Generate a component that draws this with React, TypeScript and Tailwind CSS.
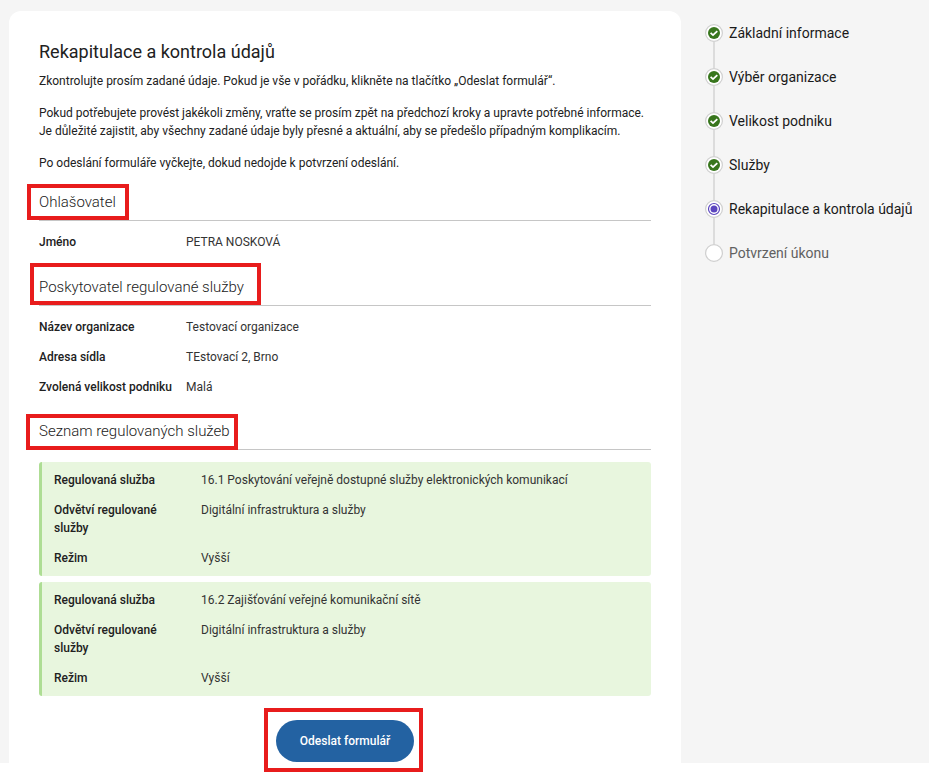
import { clsx } from "clsx";

interface Field {
  label: string;
  value: string;
}

type StepState = "done" | "current" | "pending";

const applicant: Field[] = [{ label: "Jméno", value: "PETRA NOSKOVÁ" }];

const provider: Field[] = [
  { label: "Název organizace", value: "Testovací organizace" },
  { label: "Adresa sídla", value: "TEstovací 2, Brno" },
  { label: "Zvolená velikost podniku", value: "Malá" },
];

const services: Field[][] = [
  [
    { label: "Regulovaná služba", value: "16.1 Poskytování veřejně dostupné služby elektronických komunikací" },
    { label: "Odvětví regulované služby", value: "Digitální infrastruktura a služby" },
    { label: "Režim", value: "Vyšší" },
  ],
  [
    { label: "Regulovaná služba", value: "16.2 Zajišťování veřejné komunikační sítě" },
    { label: "Odvětví regulované služby", value: "Digitální infrastruktura a služby" },
    { label: "Režim", value: "Vyšší" },
  ],
];

const steps: { label: string; state: StepState }[] = [
  { label: "Základní informace", state: "done" },
  { label: "Výběr organizace", state: "done" },
  { label: "Velikost podniku", state: "done" },
  { label: "Služby", state: "done" },
  { label: "Rekapitulace a kontrola údajů", state: "current" },
  { label: "Potvrzení úkonu", state: "pending" },
];

// Red marker frame laid over the element it highlights
function Frame({ className }: { className: string }) {
  return <div className={clsx("pointer-events-none absolute border-4 border-[#e81c1c]", className)} />;
}

function FieldList({ fields }: { fields: Field[] }) {
  return (
    <dl className="space-y-3 text-xs leading-[18px]">
      {fields.map((f) => (
        <div key={f.label} className="flex">
          <dt className="w-[147px] shrink-0 pr-3 font-medium text-[#212121]">{f.label}</dt>
          <dd className="min-w-0 flex-1 text-[#333333]">{f.value}</dd>
        </div>
      ))}
    </dl>
  );
}

function SectionHeading({ title, frame }: { title: string; frame: string }) {
  return (
    <div className="relative border-b border-[#c6c6c6] pb-2">
      <h2 className="text-[15px] font-light leading-5 text-[#212121]">{title}</h2>
      <Frame className={frame} />
    </div>
  );
}

function StepIcon({ state }: { state: StepState }) {
  return (
    <svg className="size-[18px] shrink-0" viewBox="0 0 18 18" fill="none" aria-hidden="true">
      <circle cx="9" cy="9" r="8.4" fill="#fff" stroke="#cfcfcf" strokeWidth="1.2" />
      {state === "done" && (
        <>
          <circle cx="9" cy="9" r="6" fill="#38761d" />
          <path d="M5.6 8.9 8 11.1 12.3 7.1" stroke="#fff" strokeWidth="1.8" />
        </>
      )}
      {state === "current" && (
        <>
          <circle cx="9" cy="9" r="5.5" stroke="#5b45bf" strokeWidth="1.2" />
          <circle cx="9" cy="9" r="3.5" fill="#5b45bf" />
        </>
      )}
    </svg>
  );
}

export default function App() {
  return (
    <div className="min-h-screen bg-white font-[Roboto,sans-serif] text-[#212121]">
      <div className="flex gap-6 bg-[#f5f5f5] pl-[9px] pt-[11px]">
        <main className="min-w-0 flex-1 rounded-t-xl bg-white px-[30px] pb-px pt-[30px]">
          <h1 className="text-lg leading-[22px]">Rekapitulace a kontrola údajů</h1>
          <div className="mt-[9px] space-y-[14px] text-xs leading-[18px]">
            <p>Zkontrolujte prosím zadané údaje. Pokud je vše v pořádku, klikněte na tlačítko „Odeslat formulář“.</p>
            <p>
              Pokud potřebujete provést jakékoli změny, vraťte se prosím zpět na předchozí kroky a upravte potřebné informace.
              <br />
              Je důležité zajistit, aby všechny zadané údaje byly přesné a aktuální, aby se předešlo případným komplikacím.
            </p>
            <p>Po odeslání formuláře vyčkejte, dokud nedojde k potvrzení odeslání.</p>
          </div>

          <section className="mt-5">
            <SectionHeading title="Ohlašovatel" frame="-left-3 -top-2 h-9 w-[102px]" />
            <div className="pt-3">
              <FieldList fields={applicant} />
            </div>
          </section>

          <section className="mt-[26px]">
            <SectionHeading title="Poskytovatel regulované služby" frame="-left-[9px] -top-[14px] h-[42px] w-[231px]" />
            <div className="pt-3">
              <FieldList fields={provider} />
            </div>
          </section>

          <section className="mt-[25px]">
            <SectionHeading title="Seznam regulovaných služeb" frame="-left-[13px] -top-[7px] h-9 w-[212px]" />
            <div className="space-y-[6px] pt-3">
              {services.map((fields) => (
                <div key={fields[0].value} className="rounded-[3px] border-l-3 border-[#aedd94] bg-[#e8f6de] px-3 py-[9px]">
                  <FieldList fields={fields} />
                </div>
              ))}
            </div>
          </section>

          <div className="flex justify-center pt-6">
            <div className="relative">
              <button type="button" className="block h-[42px] rounded-full bg-[#2362a2] px-6 text-xs font-medium text-white">
                Odeslat formulář
              </button>
              <Frame className="-left-3 -top-3 h-16 w-[159px]" />
            </div>
          </div>
        </main>

        <aside className="w-56 shrink-0 pt-[13px]">
          <ol>
            {steps.map((step, i) => (
              <li key={step.label} className="flex gap-[6px] text-sm leading-[18px]">
                <div className="flex flex-col items-center">
                  <StepIcon state={step.state} />
                  {i < steps.length - 1 && <div className="h-[26px] w-[2px] bg-[#dcdcdc]" />}
                </div>
                <span className={step.state === "pending" ? "text-[#616161]" : "text-[#1a1a1a]"}>{step.label}</span>
              </li>
            ))}
          </ol>
        </aside>
      </div>
    </div>
  );
}
